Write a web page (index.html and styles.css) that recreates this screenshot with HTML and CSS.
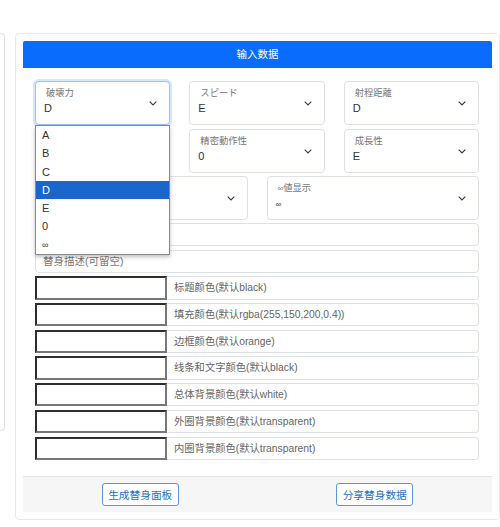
FILE: index.html
```html
<!DOCTYPE html>
<html lang="zh">
<head>
<meta charset="utf-8">
<title>输入数据</title>
<link rel="stylesheet" href="styles.css">
</head>
<body>
<div class="page">
  <div class="side"></div>
  <div class="card">
    <div class="card-header">输入数据</div>
    <div class="form">
      <div class="row3">
        <div class="sel focus">
          <div class="sel-label">破壊力</div>
          <div class="sel-value">D</div>
          <svg class="chev" width="8" height="5" viewBox="0 0 8 5"><path d="M0.7 0.7 L4 4 L7.3 0.7" fill="none" stroke="#343a40" stroke-width="1.1"/></svg>
          <ul class="dropdown">
            <li>A</li>
            <li>B</li>
            <li>C</li>
            <li class="active">D</li>
            <li>E</li>
            <li>0</li>
            <li class="inf">∞</li>
          </ul>
        </div>
        <div class="sel">
          <div class="sel-label">スピード</div>
          <div class="sel-value">E</div>
          <svg class="chev" width="8" height="5" viewBox="0 0 8 5"><path d="M0.7 0.7 L4 4 L7.3 0.7" fill="none" stroke="#343a40" stroke-width="1.1"/></svg>
        </div>
        <div class="sel">
          <div class="sel-label">射程距離</div>
          <div class="sel-value">D</div>
          <svg class="chev" width="8" height="5" viewBox="0 0 8 5"><path d="M0.7 0.7 L4 4 L7.3 0.7" fill="none" stroke="#343a40" stroke-width="1.1"/></svg>
        </div>
      </div>
      <div class="row3">
        <div class="sel">
          <svg class="chev" width="8" height="5" viewBox="0 0 8 5"><path d="M0.7 0.7 L4 4 L7.3 0.7" fill="none" stroke="#343a40" stroke-width="1.1"/></svg>
        </div>
        <div class="sel">
          <div class="sel-label">精密動作性</div>
          <div class="sel-value">0</div>
          <svg class="chev" width="8" height="5" viewBox="0 0 8 5"><path d="M0.7 0.7 L4 4 L7.3 0.7" fill="none" stroke="#343a40" stroke-width="1.1"/></svg>
        </div>
        <div class="sel">
          <div class="sel-label">成長性</div>
          <div class="sel-value">E</div>
          <svg class="chev" width="8" height="5" viewBox="0 0 8 5"><path d="M0.7 0.7 L4 4 L7.3 0.7" fill="none" stroke="#343a40" stroke-width="1.1"/></svg>
        </div>
      </div>
      <div class="row2">
        <div class="sel">
          <svg class="chev" width="8" height="5" viewBox="0 0 8 5"><path d="M0.7 0.7 L4 4 L7.3 0.7" fill="none" stroke="#343a40" stroke-width="1.1"/></svg>
        </div>
        <div class="sel">
          <div class="sel-label"><span class="small-inf">∞</span>値显示</div>
          <div class="sel-value"><span class="small-inf">∞</span></div>
          <svg class="chev" width="8" height="5" viewBox="0 0 8 5"><path d="M0.7 0.7 L4 4 L7.3 0.7" fill="none" stroke="#343a40" stroke-width="1.1"/></svg>
        </div>
      </div>
      <div class="text-input"></div>
      <div class="text-input">替身描述(可留空)</div>
      <div class="color-row"><div class="swatch"></div><div class="color-label">标题颜色(默认black)</div></div>
      <div class="color-row"><div class="swatch"></div><div class="color-label">填充颜色(默认rgba(255,150,200,0.4))</div></div>
      <div class="color-row"><div class="swatch"></div><div class="color-label">边框颜色(默认orange)</div></div>
      <div class="color-row"><div class="swatch"></div><div class="color-label">线条和文字颜色(默认black)</div></div>
      <div class="color-row"><div class="swatch"></div><div class="color-label">总体背景颜色(默认white)</div></div>
      <div class="color-row"><div class="swatch"></div><div class="color-label">外圈背景颜色(默认transparent)</div></div>
      <div class="color-row"><div class="swatch"></div><div class="color-label">内圈背景颜色(默认transparent)</div></div>
    </div>
    <div class="card-footer">
      <div class="btn-cell"><button class="btn">生成替身面板</button></div>
      <div class="btn-cell"><button class="btn">分享替身数据</button></div>
    </div>
  </div>
</div>
</body>
</html>
```
FILE: styles.css
```css
* { box-sizing: border-box; }
body {
  margin: 0;
  background: #fff;
  font-family: "Liberation Sans", "Noto Sans CJK SC", sans-serif;
  color: #333;
}
.page {
  display: flex;
  align-items: flex-start;
  padding-top: 33px;
  gap: 10px;
}
.side {
  flex: none;
  width: 5px;
  height: 398px;
  border: 1px solid #e4e4e4;
  border-left: none;
  border-radius: 0 4px 4px 0;
}
.card {
  flex: none;
  width: 485px;
  border: 1px solid #e9e9e9;
  border-radius: 4px;
  padding: 7px;
}
.card-header {
  height: 27px;
  background: #0a6cfd;
  color: #fff;
  font-size: 10.5px;
  line-height: 27px;
  text-align: center;
  border-radius: 2px 2px 0 0;
}
.form {
  padding: 13px 13px 0 12px;
  display: flex;
  flex-direction: column;
  gap: 3.5px;
}
.row3 {
  display: grid;
  grid-template-columns: 1fr 1fr 1fr;
  column-gap: 19px;
}
.row2 {
  display: grid;
  grid-template-columns: 1fr 1fr;
  column-gap: 19px;
}
.sel {
  position: relative;
  height: 44px;
  border: 1px solid #dee2e6;
  border-radius: 4px;
  padding: 5px 24px 0 8px;
  background: #fff;
}
.row2 .sel { height: 43.5px; }
.sel.focus {
  border-color: #9ec2f7;
  box-shadow: 0 0 0 2px rgba(13, 110, 253, 0.18);
}
.sel-label {
  padding-left: 2px;
  font-size: 9.3px;
  line-height: 13px;
  color: #777;
  white-space: nowrap;
}
.sel-value {
  font-size: 11px;
  line-height: 16px;
  color: #333;
}
.small-inf { font-size: 8px; }
.chev {
  position: absolute;
  right: 12px;
  top: 19px;
}
.dropdown {
  position: absolute;
  left: -1px;
  right: -1px;
  top: 43px;
  margin: 0;
  padding: 0;
  list-style: none;
  background: #fff;
  border: 1px solid #8a8a8a;
  box-shadow: 0 2px 4px rgba(0, 0, 0, 0.25);
  z-index: 5;
}
.dropdown li {
  height: 18.3px;
  line-height: 18.3px;
  padding-left: 6px;
  font-size: 11px;
  color: #333;
}
.dropdown li.inf { font-size: 9px; }
.dropdown li.active {
  background: #1a66cc;
  color: #fff;
}
.text-input {
  height: 23.2px;
  border: 1px solid #dee2e6;
  border-radius: 4px;
  padding-left: 7px;
  font-size: 10.5px;
  line-height: 21px;
  color: #777;
}
.color-row {
  display: flex;
  height: 23.2px;
}
.swatch {
  flex: none;
  width: 132px;
  border: 2px solid;
  border-color: #2e2e2e #777 #777 #2e2e2e;
  background: #fff;
}
.color-label {
  flex: 1;
  border: 1px solid #dee2e6;
  border-left: none;
  border-radius: 0 4px 4px 0;
  padding-left: 7px;
  font-size: 10.3px;
  line-height: 21px;
  color: #666;
  white-space: nowrap;
}
.card-footer {
  margin-top: 16px;
  height: 36px;
  background: #f6f6f6;
  border-top: 1px solid #e4e4e4;
  display: grid;
  grid-template-columns: 1fr 1fr;
  align-items: center;
}
.btn-cell {
  display: flex;
  justify-content: center;
}
.btn {
  width: 77px;
  height: 23px;
  padding: 0;
  background: #fff;
  border: 1px solid #5b97d8;
  border-radius: 3px;
  color: #1d6fcf;
  font-family: "Liberation Sans", "Noto Sans CJK SC", sans-serif;
  font-size: 10.7px;
}
```
